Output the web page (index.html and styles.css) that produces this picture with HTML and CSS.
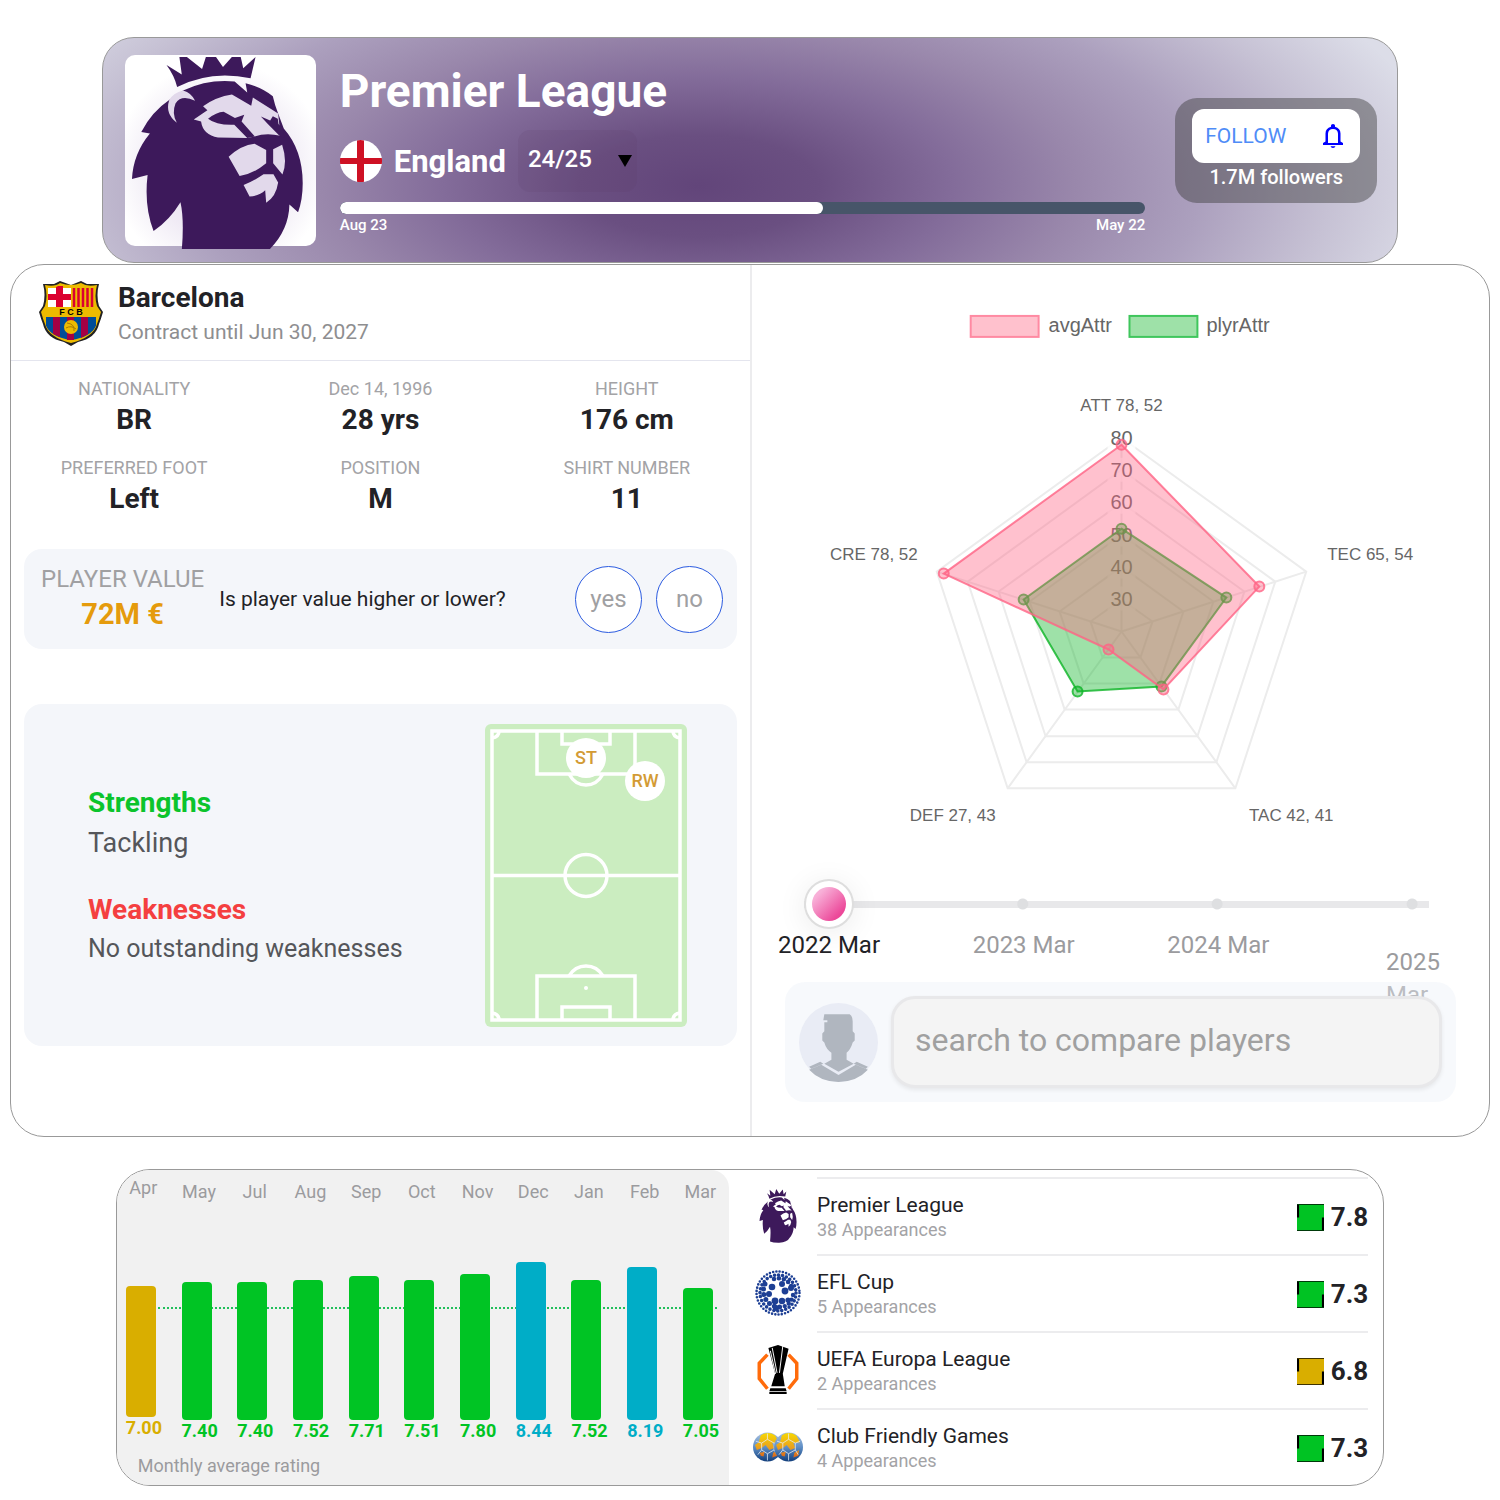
FILE: index.html
```html
<!DOCTYPE html>
<html lang="en">
<head>
<meta charset="utf-8">
<meta name="viewport" content="width=device-width, initial-scale=1">
<title>Premier League</title>
<link rel="stylesheet" href="styles.css">
</head>
<body>
<svg class="sprite" aria-hidden="true">
  <defs>
    <g id="lion">
      <path fill="#3d195b" d="M172 110Q163 75 140 44L186 73L176 0L247 56L268-10L310 50L358-4L371 54L408 20L393 84Q275 58 172 110Z"/>
      <path fill="#3d195b" d="M190 121Q265 86 345 94L383 127L378 99Q425 110 460 138Q466 165 476 190L493 235Q550 300 550 400Q550 450 536 487L510 464Q508 540 452 597Q420 650 310 658Q230 660 182 640Q196 520 182 457Q150 510 101 544Q72 470 83 375L36 387Q40 310 90 250L64 246Q95 185 150 148Z"/>
      <path fill="currentColor" d="M148 150Q160 128 190 121Q215 128 226 152Q185 132 167 160Q155 190 171 218Q135 190 148 150Z"/>
      <path fill="currentColor" d="M337 133Q290 140 250 168L263 180L222 208L244 214Q250 255 295 262L383 264L405 259Q440 247 483 257L476 190L400 142L395 167Z"/>
      <path fill="#3d195b" d="M265 206Q290 186 312 185L346 204L374 194L366 214L406 259L383 264L344 224Q290 226 265 206ZM424 199L452 211L460 198L475 206L477 222L491 236L495 264L480 257L445 222Z"/>
      <path fill="currentColor" d="M327 320Q365 285 405 281L440 300V340Q400 373 360 378ZM461 298L488 284Q505 335 489 374L461 340ZM372 405Q400 395 432 373H462L476 398Q470 440 440 459L437 421Q420 438 390 440Z"/>
    </g>
    <g id="shirt">
      <rect width="26" height="26" fill="currentColor"/>
      <path d="M0 .5H26M0 25.500H26" stroke="#000" opacity=".7"/>
      <path d="M1 1V13M25 13V25" stroke="#000" stroke-width="2"/>
    </g>
    <linearGradient id="sea" x1="0" y1="0" x2="0" y2="1"><stop offset="0" stop-color="#a9c1df"/><stop offset=".5" stop-color="#5f8fc6"/><stop offset="1" stop-color="#123f7d"/></linearGradient>
    <linearGradient id="land" x1="0" y1="0" x2="0" y2="1"><stop offset="0" stop-color="#f8d800"/><stop offset=".6" stop-color="#e8a020"/><stop offset="1" stop-color="#d8621c"/></linearGradient>
  </defs>
</svg>

<header class="league">
  <div class="league-logo">
    <svg viewBox="15 21 575 576" role="img" aria-label="Premier League logo"><use href="#lion"/></svg>
  </div>
  <div class="league-info">
    <h1>Premier League</h1>
    <div class="league-row">
      <svg class="flag" viewBox="0 0 42 42" role="img" aria-label="England flag"><circle cx="21" cy="21" r="21" fill="#fff"/><path d="M17 .4a21 21 0 0 1 7 0V18H41.800a21 21 0 0 1 0 6H24V41.800a21 21 0 0 1-7 0V24H.2a21 21 0 0 1 0-6H17Z" fill="#ce1124"/></svg>
      <span class="country">England</span>
      <div class="season">
        <select aria-label="Season"><option>24/25</option><option>23/24</option></select>
        <svg viewBox="0 0 14 12" aria-hidden="true"><path d="M0 0H14L7 12Z"/></svg>
      </div>
    </div>
    <div class="progress"><div class="progress-fill" style="width:60%"></div></div>
    <div class="progress-dates"><span>Aug 23</span><span>May 22</span></div>
  </div>
  <div class="follow">
    <button type="button" class="follow-btn">FOLLOW
      <svg viewBox="0 0 20 24" aria-hidden="true"><path fill-rule="evenodd" d="M0 19V21H20V19L17.500 17.500V9.500C17.500 6 15.500 3.500 12 2.700V1.500Q12 0 10 0T8 1.500V2.700C4.500 3.500 2.500 6 2.500 9.500V17.500ZM5 19V9.800C5 6.800 7 5 10 5S15 6.800 15 9.800V19ZM7.500 22.200H12.500Q12 24 10 24T7.500 22.200Z"/></svg>
    </button>
    <span>1.7M followers</span>
  </div>
</header>

<main class="player">
  <section class="profile">
    <div class="club">
      <svg class="crest" viewBox="0 0 64 66" role="img" aria-label="Barcelona crest">
        <defs><clipPath id="shield"><path d="M7 7Q16 9 21 5Q32 9 42 5Q48 9 56 7Q54 16 57 26L60 33Q59 40 58 43Q55 57 32 62Q9 57 6 43Q5 40 4 33L7 26Q10 16 7 7Z"/></clipPath></defs>
        <path d="M4 4L15 4L21 1L32 5L42 1L48 4L60 4Q57 15 60 26L64 32Q62 39 60 44Q57 58 39 62L32 66L25 62Q7 58 4 44Q2 39 0 32L4 26Q7 15 4 4Z" fill="#222"/>
        <path d="M6 5Q16 7 21 3Q32 7 42 3Q48 7 58 5Q55 16 58 26L62 32Q60 39 58 44Q55 57 32 63Q9 57 6 44Q4 39 2 32L6 26Q9 16 6 5Z" fill="#edbb00"/>
        <g clip-path="url(#shield)">
          <path d="M9 8H32V27H9Z" fill="#fff"/><path d="M17 6H24V27H17ZM9 14H32V20H9Z" fill="#db0030"/>
          <path d="M35 8V27M39.500 8V27M44 8V27M48.500 8V27M53 8V27" stroke="#db0030" stroke-width="2.500"/>
          <path d="M7 37H57V46Q52 57 32 60Q12 57 7 46Z" fill="#004d98"/>
          <path d="M14 37H21V57L14 54ZM28 37H35V60H28ZM42 37H49V54L42 58Z" fill="#a50044"/>
        </g>
        <circle cx="32" cy="47" r="7" fill="#edbb00"/><path d="M28 43Q36 44 35 51M27 48Q32 45 37 49" fill="none" stroke="#a87b00"/>
        <text x="32" y="35" class="crest-text">F C B</text>
      </svg>
      <div>
        <h2>Barcelona</h2>
        <p>Contract until Jun 30, 2027</p>
      </div>
    </div>

    <dl class="facts">
      <div><dt>NATIONALITY</dt><dd>BR</dd></div>
      <div><dt>Dec 14, 1996</dt><dd>28 yrs</dd></div>
      <div><dt>HEIGHT</dt><dd>176 cm</dd></div>
      <div><dt>PREFERRED FOOT</dt><dd>Left</dd></div>
      <div><dt>POSITION</dt><dd>M</dd></div>
      <div><dt>SHIRT NUMBER</dt><dd>11</dd></div>
    </dl>

    <div class="value">
      <div class="value-now"><span>PLAYER VALUE</span><strong>72M €</strong></div>
      <p>Is player value higher or lower?</p>
      <button type="button">yes</button>
      <button type="button">no</button>
    </div>

    <div class="traits">
      <div class="traits-text">
        <h3 class="good">Strengths</h3>
        <p class="big">Tackling</p>
        <h3 class="bad">Weaknesses</h3>
        <p>No outstanding weaknesses</p>
      </div>
      <svg class="pitch" viewBox="0 0 202 303" role="img" aria-label="Positions on the pitch">
        <rect width="202" height="303" rx="6" fill="#cbedc0"/>
        <g fill="none" stroke="#fff" stroke-width="3.500">
          <path d="M7 7H195V296H7ZM7 151.500H195M52 7V50H150V7M77 7V20H125V7M52 296V252H150V296M77 296V283H125V296"/>
          <circle cx="101" cy="151.500" r="21"/>
          <path d="M84 50Q90 61 101 61T118 50M84 252Q90 242 101 242T118 252M7 14Q14 13 14 7M195 14Q188 13 188 7M7 289Q14 290 14 296M195 289Q188 290 188 296"/>
        </g>
        <circle cx="101" cy="264" r="2" fill="#fff"/>
        <g class="spot"><circle cx="101" cy="34" r="20"/><text x="101" y="40">ST</text><circle cx="160" cy="57" r="20"/><text x="160" y="63">RW</text></g>
      </svg>
    </div>
  </section>

  <section class="compare">
    <svg class="radar" viewBox="0 0 738 572" role="img" aria-label="Attribute comparison">
      <rect x="219" y="51" width="68" height="21" fill="#ffc1cd" stroke="#ff8aa2" stroke-width="2"/>
      <rect x="378" y="51" width="68" height="21" fill="#9ee1a8" stroke="#3fc65c" stroke-width="2"/>
      <g class="legend"><text x="297" y="67">avgAttr</text><text x="455" y="67">plyrAttr</text></g>
      <g transform="translate(370 367)">
        <g class="web">
          <path d="M0-32L31-10L19 26H-19L-31-10ZM0-65L62-20L38 52H-38L-62-20ZM0-97L92-30L57 78H-57L-92-30ZM0-129L123-40L76 105H-76L-123-40ZM0-162L154-50L95 131H-95L-154-50ZM0-194L185-60L114 157H-114L-185-60Z"/>
          <path d="M0 0V-194M0 0L185-60M0 0L114 157M0 0L-114 157M0 0L-185-60"/>
        </g>
        <path class="tick-back" d="M-14-206H14V-182H-14ZM-14-174H14V-150H-14ZM-14-142H14V-118H-14ZM-14-109H14V-85H-14ZM-14-77H14V-53H-14ZM-14-45H14V-21H-14Z"/>
        <g class="ticks"><text y="-187">80</text><text y="-155">70</text><text y="-123">60</text><text y="-90">50</text><text y="-58">40</text><text y="-26">30</text></g>
        <g class="names"><text y="-221">ATT 78, 52</text><text x="249" y="-72">TEC 65, 54</text><text x="170" y="190">TAC 42, 41</text><text x="-169" y="190">DEF 27, 43</text><text x="-248" y="-72">CRE 78, 52</text></g>
        <g class="plyr"><path d="M0-103L105-34L40 55L-44 60L-98-32Z"/><circle cy="-103" r="5"/><circle cx="105" cy="-34" r="5"/><circle cx="40" cy="55" r="5"/><circle cx="-44" cy="60" r="5"/><circle cx="-98" cy="-32" r="5"/></g>
        <g class="avg"><path d="M0-187L138-45L42 58L-13 18L-178-58Z"/><circle cy="-187" r="5"/><circle cx="138" cy="-45" r="5"/><circle cx="42" cy="58" r="5"/><circle cx="-13" cy="18" r="5"/><circle cx="-178" cy="-58" r="5"/></g>
      </g>
    </svg>

    <div class="timeline">
      <input type="range" min="0" max="3" value="0" aria-label="Month">
      <div class="timeline-labels"><span class="on">2022 Mar</span><span>2023 Mar</span><span>2024 Mar</span><span class="last">2025 Mar</span></div>
    </div>

    <div class="search">
      <svg viewBox="0 0 78 78" aria-hidden="true">
        <circle cx="39" cy="39" r="39" fill="#e9ecf5"/>
        <path fill="#b0b6bf" d="M25 11H50Q53 13 53 18V28L55 30V37L53 39Q51 46 47 49V56L54 60L39 68L25 60L32 56V49Q27 46 25 39L23 37V30L25 28V19H28V17H24ZM22 61L39 71L56 61L68 66Q57 78 39 78T10 66ZM10 63L21 58L24 60L12 65ZM57 58L68 63L66 65L54 60Z"/>
      </svg>
      <input type="text" placeholder="search to compare players" aria-label="Search to compare players">
    </div>
  </section>
</main>

<section class="season-stats">
  <div class="monthly">
    <div class="bars">
      <div class="bar first gold"><span>Apr</span><i style="height:131px"></i><b>7.00</b></div>
      <div class="bar"><span>May</span><i style="height:138px"></i><b>7.40</b></div>
      <div class="bar"><span>Jul</span><i style="height:138px"></i><b>7.40</b></div>
      <div class="bar"><span>Aug</span><i style="height:140px"></i><b>7.52</b></div>
      <div class="bar"><span>Sep</span><i style="height:144px"></i><b>7.71</b></div>
      <div class="bar"><span>Oct</span><i style="height:140px"></i><b>7.51</b></div>
      <div class="bar"><span>Nov</span><i style="height:146px"></i><b>7.80</b></div>
      <div class="bar blue"><span>Dec</span><i style="height:158px"></i><b>8.44</b></div>
      <div class="bar"><span>Jan</span><i style="height:140px"></i><b>7.52</b></div>
      <div class="bar blue"><span>Feb</span><i style="height:153px"></i><b>8.19</b></div>
      <div class="bar"><span>Mar</span><i style="height:132px"></i><b>7.05</b></div>
    </div>
    <p>Monthly average rating</p>
  </div>
  <ul class="cups">
    <li>
      <svg class="cup-logo small-lion" viewBox="15 -10 555 670" preserveAspectRatio="none" aria-hidden="true"><use href="#lion"/></svg>
      <div class="cup"><div><h4>Premier League</h4><p>38 Appearances</p></div><svg class="mark" viewBox="0 0 26 26" aria-hidden="true"><use href="#shirt"/></svg><strong>7.8</strong></div>
    </li>
    <li>
      <svg class="cup-logo" viewBox="0 0 46 50" aria-hidden="true">
        <g fill="none" stroke="#1d3f94" stroke-linecap="round">
          <circle cx="23" cy="25" r="21.500" stroke-width="2.600" stroke-dasharray="0 3.300"/>
          <circle cx="23" cy="25" r="18" stroke-width="3.600" stroke-dasharray="0 4.040"/>
          <path d="M10 16A16 16 0 0 0 25 39" stroke-width="5" stroke-dasharray="0 5.400"/>
          <path d="M19 11A14 14 0 0 1 37 20" stroke-width="4.600" stroke-dasharray="0 5"/>
          <path d="M38 27A14 14 0 0 1 27 39" stroke-width="4.400" stroke-dasharray="0 4.800"/>
        </g>
        <g fill="#1d3f94"><circle cx="17" cy="19" r="3.300"/><circle cx="14" cy="26" r="3"/><circle cx="27" cy="16" r="3"/><circle cx="30" cy="23" r="3.400"/><circle cx="36" cy="20" r="3"/><circle cx="20" cy="33" r="3.400"/><circle cx="27" cy="33" r="3.200"/><circle cx="33" cy="32" r="2.600"/><circle cx="21" cy="40" r="3"/></g>
      </svg>
      <div class="cup"><div><h4>EFL Cup</h4><p>5 Appearances</p></div><svg class="mark" viewBox="0 0 26 26" aria-hidden="true"><use href="#shirt"/></svg><strong>7.3</strong></div>
    </li>
    <li>
      <svg class="cup-logo" viewBox="0 0 46 52" aria-hidden="true">
        <path d="M12 10L3.500 19V35L12 45.500M34 10L42.500 19V35L34 45.500" fill="none" stroke="#ff6b0b" stroke-width="3.600"/>
        <path d="M13 3L23 0L34 4L28 30L30 43H16L20 30Z"/><path d="M15 45H31L32 48H14ZM14 49H32V51H14Z"/>
        <path d="M17 3L22 29M28 1L24.500 29M15 6L20.500 30" fill="none" stroke="#fff"/>
      </svg>
      <div class="cup gold"><div><h4>UEFA Europa League</h4><p>2 Appearances</p></div><svg class="mark" viewBox="0 0 26 26" aria-hidden="true"><use href="#shirt"/></svg><strong>6.8</strong></div>
    </li>
    <li>
      <svg class="cup-logo" viewBox="0 0 52 34" aria-hidden="true">
        <g id="ball"><circle cx="15" cy="17" r="15" fill="url(#sea)"/><path fill="url(#land)" d="M8 5Q15 0 23 5L27 12L20 13L22 18L17 20L13 15L9 18L4 20L2 15L6 12ZM7 23L12 22L11 27L8 26ZM21 23L26 20L25 26L20 28Z"/><path d="M15 3V9L9 13V20L15 24L22 20V13L15 9M9 13L3 11M22 13L27 11M9 20L5 25M22 20L25 25M15 24V31" fill="none" stroke="#e8eef6" stroke-width=".8"/></g>
        <use href="#ball" x="22"/>
      </svg>
      <div class="cup"><div><h4>Club Friendly Games</h4><p>4 Appearances</p></div><svg class="mark" viewBox="0 0 26 26" aria-hidden="true"><use href="#shirt"/></svg><strong>7.3</strong></div>
    </li>
  </ul>
</section>
</body>
</html>
```
FILE: styles.css
```css
* { box-sizing: border-box; margin: 0; padding: 0; }
body { padding: 37px 10px 14px; background: #fff; color: #222226; font-family: Roboto, "Liberation Sans", sans-serif; font-size: 20px; }
button, input, select { font: inherit; }
.sprite { position: absolute; width: 0; height: 0; }

/* League banner */
.league { display: flex; width: 87.600%; min-height: 226px; margin: 0 auto; padding: 17px 20px 16px 22px; border: 1px solid #999; border-radius: 32px; color: #fff;
  background: radial-gradient(ellipse 58% 142% at 46% 66%, #62457a 0, #6a4f81 16%, #836c9a 34%, #9987ab 50%, #aca0be 67%, #c6c1d4 84%, #dcdde8 100%); }
.league-logo { flex: none; width: 191px; height: 191px; padding-top: 2px; border-radius: 10px; background: radial-gradient(circle at 50% 60%, #e0d5e9 0, #f0ebf5 45%, #fff 72%); color: #e2d9eb; }
.league-logo svg { display: block; width: 191px; height: 192px; }
.league-info { flex: 1; min-width: 0; margin: 0 30px 0 24px; }
h1 { font-size: 46px; line-height: 72px; font-weight: 700; }
.league-row { display: flex; align-items: center; height: 62px; margin: 3px 0 10px; }
.flag { width: 42px; height: 42px; margin-right: 12px; }
.country { margin-right: 12px; font-size: 31px; font-weight: 700; }
.season { display: grid; align-items: center; width: 119px; height: 62px; border-radius: 12px; background: rgba(90, 55, 95, .12); }
.season select, .season svg { grid-area: 1 / 1; }
.season select { width: 100%; height: 56px; padding: 0 10px 4px; border: 0; background: none; color: #fff; font-size: 24px; font-weight: 500; appearance: none; }
.season svg { justify-self: end; width: 14px; height: 12px; margin-right: 5px; pointer-events: none; }
.progress { height: 12px; border-radius: 6px; overflow: hidden; background: #475569; }
.progress-fill { height: 12px; border-radius: 6px; background: #fff; }
.progress-dates { display: flex; justify-content: space-between; font-size: 15px; line-height: 22px; font-weight: 500; }
.follow { flex: none; align-self: center; display: flex; flex-direction: column; align-items: center; width: 202px; height: 105px; padding: 11px 17px; border-radius: 22px; background: rgba(60, 60, 60, .45); font-weight: 500; font-size: 20px; line-height: 28px; }
.follow-btn { display: flex; align-items: center; justify-content: space-between; width: 100%; height: 54px; padding: 0 17px 0 13px; border: 0; border-radius: 12px; background: #fff; color: #4f8cf7; font-size: 21px; font-weight: 400; }
.follow-btn svg { width: 20px; height: 24px; fill: #00f; }

/* Player card */
.player { display: grid; grid-template-columns: 742fr 738fr; min-height: 873px; margin-top: 1px; border: 1px solid #999; border-radius: 34px; overflow: hidden; }
.profile { min-width: 0; border-right: 2px solid #ececee; }
.club { display: flex; align-items: center; gap: 15px; height: 96px; padding-left: 28px; border-bottom: 1px solid #e4e5ee; }
.club div { padding-top: 2px; }
.crest { width: 64px; height: 66px; }
.crest-text { font: 700 9px "Liberation Sans", sans-serif; text-anchor: middle; }
h2 { font-size: 28px; line-height: 36px; }
.club p { color: #8e8e90; font-size: 21px; line-height: 32px; }
.facts { display: grid; grid-template-columns: 1fr 1fr 1fr; row-gap: 17px; padding-top: 15px; text-align: center; }
.facts dt { color: #a3a3a6; font-size: 18px; line-height: 26px; }
.facts dd { font-size: 28px; line-height: 36px; font-weight: 700; }
.value, .traits { display: flex; align-items: center; margin: 0 13px; border-radius: 18px; background: #f4f6fa; }
.value { height: 100px; margin-top: 32px; padding: 0 14px 0 17px; }
.value-now { margin-right: 15px; text-align: center; color: #a0a0a2; font-size: 24px; }
.value-now strong { display: block; color: #e59b0c; font-size: 29px; line-height: 40px; }
.value-now span { line-height: 30px; }
.value p { flex: 1; font-size: 21px; }
.value button { width: 67px; height: 67px; margin-left: 14px; border: 1px solid #2b5be0; border-radius: 50%; background: #fff; color: #a0a0a2; font-size: 24px; }
.traits { justify-content: space-between; min-height: 342px; margin-top: 55px; padding: 0 50px 0 64px; }
h3 { font-size: 28px; line-height: 40px; }
.good { color: #0bc42c; }
.bad { margin-top: 27px; color: #f43f40; }
.traits p { color: #55565a; font-size: 25px; line-height: 38px; }
.traits .big { font-size: 27px; line-height: 40px; }
.pitch { width: 202px; height: 303px; }
.spot { fill: #fff; text-anchor: middle; font-size: 18px; font-weight: 500; }
.spot text { fill: #d39b35; }

.compare { min-width: 0; }
.radar { display: block; width: 100%; font-family: "Liberation Sans", sans-serif; fill: #666; }
.legend { font-size: 20px; }
.web { fill: none; stroke: #ececec; stroke-width: 2; }
.tick-back { fill: #fff; opacity: .8; }
.ticks { font-size: 20px; text-anchor: middle; }
.names { font-size: 17px; text-anchor: middle; }
.plyr { fill: rgba(13, 180, 38, .4); stroke: rgba(13, 180, 38, .8); stroke-width: 2; }
.avg { fill: rgba(255, 99, 132, .4); stroke: rgba(255, 99, 132, .8); stroke-width: 2; }
.timeline { height: 103px; margin-top: 43px; padding: 0 49px 0 26px; }
.timeline input { display: block; width: calc(100% - 37px); height: 50px; margin-left: 26px; appearance: none;
  background: radial-gradient(circle at 35% 50%, #dedfe1 5px, transparent 6px), radial-gradient(circle at 66.100% 50%, #dedfe1 5px, transparent 6px), radial-gradient(circle at 97.300% 50%, #dedfe1 5px, transparent 6px), linear-gradient(#e8e8ea, #e8e8ea) center / 100% 7px no-repeat; }
.timeline input::-webkit-slider-runnable-track { height: 50px; background: none; }
.timeline input::-webkit-slider-thumb { appearance: none; width: 50px; height: 50px; border: 2px solid #dedede; border-radius: 50%; background: linear-gradient(135deg, #f8b0d8 20%, #ec4899 80%) content-box, #fff; padding: 6px; box-shadow: 0 4px 30px rgba(0, 0, 0, .08); }
.timeline-labels { display: grid; grid-template-columns: 195fr 195fr 219fr 54px; color: #9b9b9e; font-size: 24px; line-height: 33px; }
.timeline-labels .on { color: #222226; }
.timeline .last { padding-top: 17px; }
.search { position: relative; display: flex; align-items: center; gap: 13px; height: 120px; margin: 0 33px; padding: 0 14px; border-radius: 20px; background: rgba(235, 240, 247, .4); }
.search svg { flex: none; width: 79px; height: 79px; }
.search input { flex: 1; min-width: 0; height: 92px; padding: 0 21px 4px; border: 3px solid #e8e8ea; border-radius: 24px; background: #f4f4f4; box-shadow: 0 2px 4px rgba(0, 0, 0, .07); font-size: 32px; }
.search input::placeholder { color: #a0a0a0; }

/* Ratings card */
.season-stats { display: grid; grid-template-columns: 612fr 654fr; width: 85.700%; min-height: 317px; margin: 32px auto 0; border: 1px solid #999; border-radius: 34px; overflow: hidden; }
.monthly { border-top-right-radius: 18px; background: #f1f1f1; color: #9b9b9e; font-size: 18px; }
.bars { position: relative; display: flex; justify-content: space-between; height: 272px; padding: 0 11px 0 9px; }
.bars::before { content: ""; position: absolute; left: 41px; right: 12px; top: 137px; border-top: 2px dotted #21bf5b; }
.bar { position: relative; display: flex; flex-direction: column; width: 35px; padding-top: 10px; color: #00c424; line-height: 24px; }
.bar span { color: #9b9b9e; text-align: center; margin-bottom: auto; }
.bar i { width: 30px; border-radius: 4px; background: currentColor; }
.bar b { line-height: 22px; }
.bar.first { padding-top: 6px; padding-bottom: 3px; }
.bar.gold, .cup.gold { color: #d9ae00; }
.bar.blue { color: #00adc7; }
.monthly p { padding: 6px 0 0 21px; line-height: 36px; }
.cups { padding: 7px 15px 0 24px; list-style: none; }
.cups li { display: flex; align-items: center; height: 77px; }
.cup-logo { flex: none; width: 50px; height: 50px; margin-right: 14px; }
.small-lion { width: 40px; height: 54px; margin: 0 19px 0 5px; color: #fff; }
.cup { flex: 1; display: flex; align-items: center; height: 77px; padding-top: 1px; border-top: 2px solid #ececee; color: #00c424; }
.cup div { flex: 1; color: #222226; }
.cup h4 { font-size: 21px; line-height: 26px; font-weight: 400; }
.cup p { color: #a3a3a6; font-size: 18px; line-height: 24px; }
.mark { width: 27px; height: 27px; margin-right: 7px; }
.cup strong { color: #222226; font-size: 26px; }
```
